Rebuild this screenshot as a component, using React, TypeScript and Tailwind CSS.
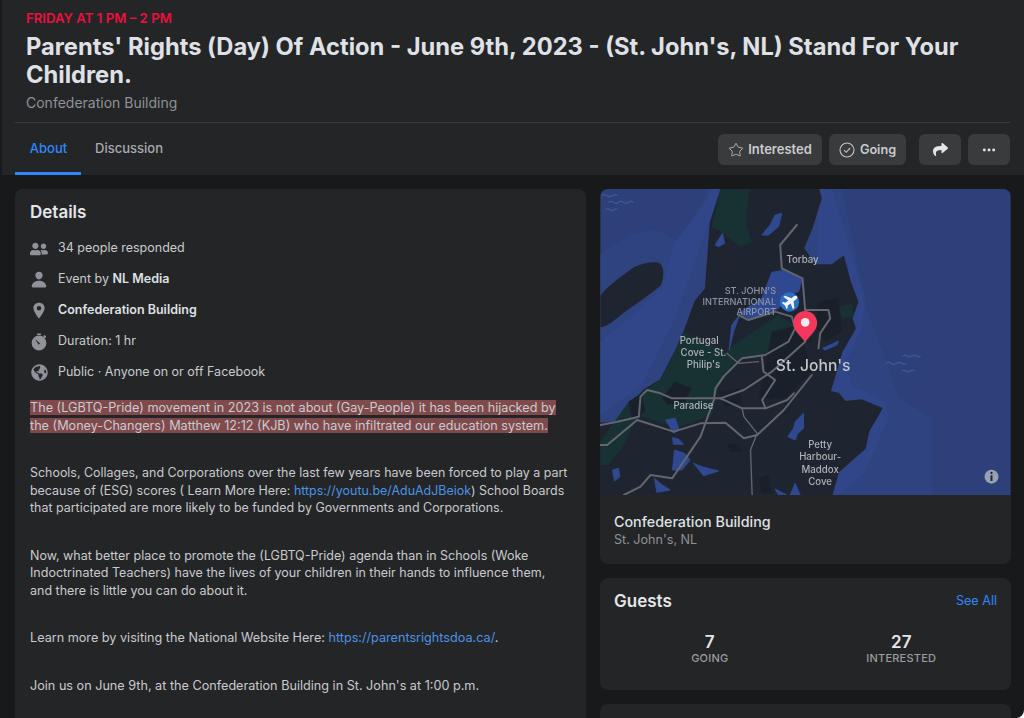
import { Star, MoreHorizontal } from "lucide-react";
import { FaGlobeAmericas, FaShare, FaUserFriends } from "react-icons/fa";
import { IoLocationSharp, IoPerson } from "react-icons/io5";

function CheckCircle() {
  return (
    <svg width="16" height="16" viewBox="0 0 16 16" fill="none" stroke="#c4c6ca" strokeWidth="1.1">
      <circle cx="8" cy="8" r="7" />
      <path d="M5 8.2l2.1 2.1L11.2 6" />
    </svg>
  );
}

function Stopwatch() {
  return (
    <svg width="18" height="18" viewBox="0 0 18 18" fill="#8f9298">
      <path d="M9 2.6a7.4 7.4 0 1 0 0 14.8A7.4 7.4 0 0 0 9 2.6z" />
      <rect x="6.8" y="0.4" width="4.4" height="1.6" rx="0.8" />
      <rect x="13.6" y="2.2" width="2.2" height="2.8" rx="0.8" transform="rotate(-40 14.7 3.6)" />
      <path d="M5 6l5 4.6-1.4 1.2z" fill="#242526" />
    </svg>
  );
}

function MapView() {
  return (
    <svg viewBox="6 12 1230 918" className="block h-[306px] w-full blur-[0.5px]" fontFamily="Inter, sans-serif">
      <rect x="6" y="12" width="1230" height="918" fill="#2e4079" />
      {/* shallow water bands */}
      <path d="M330 12C310 60 270 120 230 170C190 130 150 130 100 150C60 170 30 190 6 205V930H1000V700L900 640L860 520L800 360L770 200L730 12z" fill="#2f4381" />
      <path d="M366 12L230 400L130 600L6 690V470L90 400L190 310L230 170C280 110 320 60 340 12z" fill="#304688" />
      <path d="M660 12L700 12L760 210L800 340L790 430L740 540L760 600L860 650L870 700L800 860L720 930H640z" fill="#304688" />
      {/* land */}
      <path
        d="M368 12L660 12L668 40L640 130L615 190L650 240L700 240L735 215L755 290L778 350L760 400L770 430L730 500L695 620L720 625L740 650L790 645L850 670L810 740L800 790L720 860L700 930L6 930L6 715L56 710L136 615L186 585L230 500L256 442L291 347L321 312L336 112z"
        fill="#1f2530"
        stroke="#1f2530"
        strokeLinejoin="round"
        strokeWidth="4"
      />
      <path d="M6 332C20 310 60 280 106 247C140 232 170 228 186 236C198 250 196 280 186 302C140 340 90 370 46 407C30 420 15 425 6 427z" fill="#1f2530" />
      {/* green areas */}
      <path d="M366 12L452 12L442 120L460 170L425 185L375 145L340 125z" fill="#183234" />
      <path d="M256 442L380 500L420 470L540 390L585 420L565 490L430 520L360 600L340 690L230 730L150 700L120 690L70 790L30 840L6 840V770L90 650L186 585L230 500z" fill="#183234" />
      <path d="M720 365L760 355L765 395L730 400z" fill="#183234" />
      {/* darker town patches */}
      <g fill="#1a2029">
        <path d="M190 640L230 590L280 610L260 650L210 660z" />
        <path d="M90 650L130 625L140 680L100 700z" />
        <path d="M360 620L420 610L430 650L380 665z" />
        <path d="M520 440L600 420L640 560L560 640L480 640L500 540z" />
        <path d="M660 350L720 340L730 440L680 470L650 420z" />
        <path d="M385 775L420 780L430 800L395 800z" />
        <path d="M480 880L510 870L520 925H490z" />
      </g>
      {/* lakes */}
      <g fill="#2f4890" stroke="#2f4890" strokeLinejoin="round" strokeWidth="3">
        <path d="M490 150L515 120L530 90L550 85L540 125L510 150z" />
        <path d="M350 180L372 145L378 175L360 185z" />
        <path d="M520 262L560 255L610 285L600 320L570 330L540 370L490 395L450 400L425 385L405 440L392 495L400 420L430 380L490 340z" />
        <path d="M672 490L720 468L715 480L680 495z" />
        <path d="M568 755L585 730L590 710L615 685L615 730L598 745L590 765z" />
        <path d="M202 705L230 700L242 735L225 745z" />
        <path d="M222 758L240 762L255 778L225 778z" />
        <path d="M228 795L258 805L275 825L250 855L222 855z" />
        <path d="M285 835L310 845L360 858L315 872z" />
        <path d="M42 855L60 850L64 875L48 888z" />
        <path d="M168 880L185 895L215 915L175 922z" />
        <path d="M530 912L565 930H540z" />
        <path d="M575 930L590 895L605 930z" />
      </g>
      {/* waves */}
      <g fill="none" stroke="#5870ab" strokeWidth="2">
        <path d="M10 32q8-7 16 0t16 0 16 0" />
        <path d="M30 52q8-7 15 0t15 0 15 0 15 0 15 0" />
        <path d="M20 74q7-6 14 0t14 0 8 0" />
        <path d="M862 535q8-7 16 0t16 0 16 0 16 0" />
        <path d="M912 513q7-6 14 0t14 0 14 0 12 0" />
        <path d="M910 558q6-6 13 0t13 0 13 0" />
      </g>
      {/* roads */}
      <g fill="none" stroke="#63666d" strokeWidth="6" strokeLinejoin="round" strokeLinecap="round">
        <path d="M595 120L545 180L550 250L612 280L620 375" />
        <path d="M420 390L450 405L530 380L580 395L590 430L570 470L500 510L430 520L375 575L351 610L346 645L306 755L221 880L156 870L126 905L76 930" />
        <path d="M620 375L690 375L695 400L665 445L660 490" />
        <path d="M620 470L520 560L436 615L366 640L296 640L221 640L186 625L146 615L126 635L121 695L56 710L6 720" />
        <path d="M6 780L26 780L116 705L226 740L306 715L381 713L436 760L476 750L556 675L640 570" />
        <path d="M490 515L495 560L530 585L491 645L501 670L566 645L586 625" />
        <path d="M366 640L431 670L501 670" />
        <path d="M431 670L436 695L476 745L456 795L461 930" strokeWidth="4" />
        <path d="M385 505L420 535L480 530" strokeWidth="4" />
      </g>
      {/* labels */}
      <g fill="#aeb1b6" fontSize="29" textAnchor="middle" fontWeight="500">
        <text x="612" y="233">Torbay</text>
        <text x="302" y="476">Portugal</text>
        <text x="315" y="513">Cove - St.</text>
        <text x="315" y="550">Philip's</text>
        <text x="285" y="672">Paradise</text>
        <text x="665" y="789">Petty</text>
        <text x="665" y="826">Harbour-</text>
        <text x="665" y="863">Maddox</text>
        <text x="665" y="899">Cove</text>
      </g>
      <g fill="#8d95a8" fontSize="27.5" textAnchor="end" fontWeight="500">
        <text x="533" y="328">ST. JOHN'S</text>
        <text x="533" y="359">INTERNATIONAL</text>
        <text x="533" y="390">AIRPORT</text>
      </g>
      <text x="644" y="557" fill="#c4c6ca" fontSize="47" textAnchor="middle" fontWeight="500">St. John's</text>
      {/* airport */}
      <circle cx="573" cy="351" r="29" fill="#2d6fc4" />
      <path
        d="M596 337c-3-3-8-2-11 1l-6 6-20-5-4 4 16 9-8 8-7-1-3 3 10 6 6 10 3-3-1-7 8-8 9 16 4-4-5-20 6-6c3-3 4-6 3-9z"
        fill="#f2f4f8"
        transform="rotate(8 573 351) translate(-2 -5)"
      />
      {/* pin */}
      <path d="M620 378c-20 0-36 16-36 36 0 23 24 40 36 58 12-18 36-35 36-58 0-20-16-36-36-36z" fill="#f3385c" />
      <circle cx="620" cy="412" r="13" fill="#f5e9ec" />
      {/* info */}
      <circle cx="1179" cy="875" r="21" fill="#98a0b3" />
      <circle cx="1179" cy="864" r="3.5" fill="#1f2530" />
      <rect x="1176" y="871" width="6" height="17" fill="#1f2530" />
    </svg>
  );
}

const rowClass = "flex h-[31px] items-center gap-[10px] text-[12.5px] text-[#c9cbcf]";

export default function App() {
  return (
    <div className="h-[718px] w-[1024px] overflow-hidden rounded-br-lg border-l-2 border-[#18191a] bg-[#18191a] font-['Inter',sans-serif] antialiased">
      {/* Event header */}
      <header className="h-[175px] bg-[#242526] pl-[13px] pr-[14px]">
        <div className="h-[123px] border-b border-[#3a3b3c] px-[11px] pt-[10px]">
          <div className="text-[13.2px] font-semibold leading-[17px] text-[#ee0f3e]">FRIDAY AT 1 PM – 2 PM</div>
          <h1 className="mt-[6px] text-[23.7px] font-bold leading-[28px] text-[#dfe1e6]">
            Parents' Rights (Day) Of Action - June 9th, 2023 - (St. John's, NL) Stand For Your Children.
          </h1>
          <div className="mt-[4px] text-[14px] leading-[20px] text-[#8f9298]">Confederation Building</div>
        </div>
        <div className="flex h-[52px] items-center justify-between">
          <nav className="flex h-full text-[13px] font-medium">
            <div className="flex w-[66px] items-center justify-center border-b-[3px] border-[#2d88ff] pl-[1px] pt-[2px] text-[#2d88ff]">About</div>
            <div className="flex w-[95px] items-center justify-center pb-px pl-[1px] text-[#a8abaf]">Discussion</div>
          </nav>
          <div className="flex items-center pt-[1px]">
            <button className="flex h-[31px] w-[104px] items-center justify-center gap-[4px] rounded-md bg-[#3a3b3c] text-[13px] font-semibold text-[#c9cbcf]">
              <Star size={16} strokeWidth={1.2} />
              Interested
            </button>
            <button className="ml-[7px] flex h-[31px] w-[77px] items-center justify-center gap-[5px] rounded-md bg-[#3a3b3c] text-[12.7px] font-semibold text-[#c9cbcf]">
              <CheckCircle />
              Going
            </button>
            <button className="ml-[13px] flex h-[31px] w-[42px] items-center justify-center rounded-md bg-[#3a3b3c] text-[#e4e6eb]">
              <FaShare size={15} />
            </button>
            <button className="ml-[7px] flex h-[31px] w-[42px] items-center justify-center rounded-md bg-[#3a3b3c] text-[#e4e6eb]">
              <MoreHorizontal size={16} strokeWidth={2.4} />
            </button>
          </div>
        </div>
      </header>

      <main className="flex items-start gap-[14px] pl-[13px] pt-[14px]">
        {/* Details */}
        <section className="h-[600px] w-[571px] rounded-lg bg-[#242526] px-[15px] pt-[12px]">
          <h2 className="text-[17px] font-semibold leading-[22px] text-[#e4e6eb]">Details</h2>
          <div className="mt-[10px]">
            <div className={rowClass}>
              <span className="flex w-[18px] justify-center text-[#8f9298]"><FaUserFriends size={18} /></span>
              34 people responded
            </div>
            <div className={rowClass}>
              <span className="flex w-[18px] justify-center text-[#8f9298]"><IoPerson size={19} /></span>
              <span>Event by <b className="font-semibold text-[#dfe1e5]">NL Media</b></span>
            </div>
            <div className={rowClass}>
              <span className="flex w-[18px] justify-center text-[#8f9298]"><IoLocationSharp size={19} /></span>
              <b className="font-semibold text-[#dfe1e5]">Confederation Building</b>
            </div>
            <div className={rowClass}>
              <span className="flex w-[18px] justify-center"><Stopwatch /></span>
              Duration: 1 hr
            </div>
            <div className={rowClass}>
              <span className="flex w-[18px] justify-center text-[#8f9298]"><FaGlobeAmericas size={17} /></span>
              Public · Anyone on or off Facebook
            </div>
          </div>
          <div className="mt-[11px] flex flex-col gap-[30px] text-[12.65px] leading-[17.5px] text-[#c9cbcf]">
            <p>
              <span className="bg-[#804a4c] [box-decoration-break:clone]">
                The (LGBTQ-Pride) movement in 2023 is not about (Gay-People) it has been hijacked by the (Money-Changers) Matthew 12:12 (KJB) who have infiltrated our education system.
              </span>
            </p>
            <p className="whitespace-nowrap text-[12.45px]">
              Schools, Collages, and Corporations over the last few years have been forced to play a part
              <br />
              because of (ESG) scores ( Learn More Here: <span className="text-[#4b93e6]">https://youtu.be/AduAdJBeiok</span>) School Boards
              <br />
              that participated are more likely to be funded by Governments and Corporations.
            </p>
            <p className="text-[12.5px]">
              Now, what better place to promote the (LGBTQ-Pride) agenda than in Schools (Woke
              <br />
              Indoctrinated Teachers) have the lives of your children in their hands to influence them,
              <br />
              and there is little you can do about it.
            </p>
            <p>
              Learn more by visiting the National Website Here: <span className="text-[#4b93e6]">https://parentsrightsdoa.ca/</span>.
            </p>
            <p>Join us on June 9th, at the Confederation Building in St. John's at 1:00 p.m.</p>
          </div>
        </section>

        {/* Right column */}
        <div className="flex w-[411px] flex-col gap-[14px]">
          <section className="h-[375px] overflow-hidden rounded-lg bg-[#242526]">
            <MapView />
            <div className="px-[14px] pt-[18px]">
              <div className="text-[14.3px] font-medium leading-[18px] text-[#dfe1e5]">Confederation Building</div>
              <div className="text-[12.6px] leading-[18px] text-[#8f9298]">St. John's, NL</div>
            </div>
          </section>
          <section className="h-[112px] rounded-lg bg-[#242526] px-[14px] pt-[12px]">
            <div className="flex items-center justify-between">
              <h2 className="text-[17px] font-semibold leading-[22px] text-[#e4e6eb]">Guests</h2>
              <span className="text-[12.6px] text-[#2d88ff]">See All</span>
            </div>
            <div className="mt-[21px] grid grid-cols-2 text-center">
              <div>
                <div className="text-[17px] font-semibold leading-[18px] text-[#e4e6eb]">7</div>
                <div className="text-[11px] font-medium leading-[15px] tracking-[0.2px] text-[#9a9da2]">GOING</div>
              </div>
              <div>
                <div className="text-[17px] font-semibold leading-[18px] text-[#e4e6eb]">27</div>
                <div className="text-[11px] font-medium leading-[15px] tracking-[0.2px] text-[#9a9da2]">INTERESTED</div>
              </div>
            </div>
          </section>
          <section className="h-[40px] rounded-lg bg-[#242526]" />
        </div>
      </main>
    </div>
  );
}
